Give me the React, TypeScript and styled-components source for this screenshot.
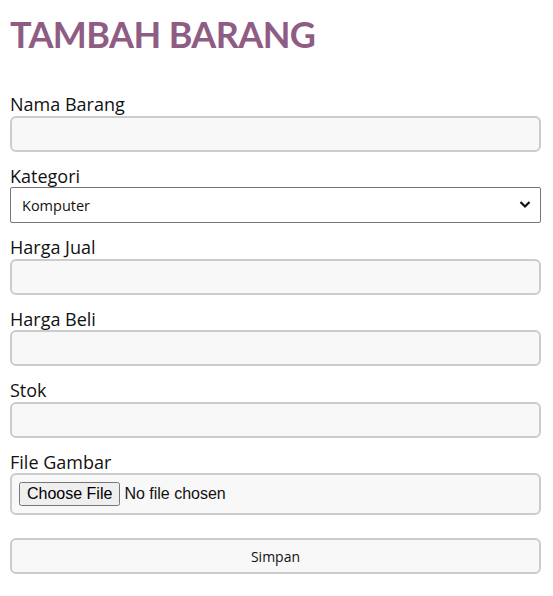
import React from "react";
import styled, { createGlobalStyle } from "styled-components";

const GlobalStyle = createGlobalStyle`
  body {
    margin: 0;
    background: #fff;
    font-family: "Open Sans", "DejaVu Sans", sans-serif;
  }
`;

const Page = styled.div`
  padding: 12px 10px 20px 10px;
  width: 531px;
`;

const Title = styled.h1`
  margin: 0 0 38px 0;
  font-family: Lato, "Open Sans", sans-serif;
  font-size: 36px;
  font-weight: 700;
  line-height: 44px;
  color: #8f5d84;
  letter-spacing: -0.6px;
`;

const Form = styled.form`
  display: flex;
  flex-direction: column;
`;

const Field = styled.div`
  display: flex;
  flex-direction: column;
  margin-bottom: 14px;
`;

const Label = styled.label`
  font-size: 18px;
  line-height: 21.5px;
  color: #111;
`;

const TextInput = styled.input`
  box-sizing: border-box;
  width: 100%;
  height: 36px;
  border: 2px solid #cccccc;
  border-radius: 6px;
  background: #f8f8f8;
  padding: 0 10px;
  font-size: 14px;
  outline: none;
`;

const SelectWrap = styled.div`
  position: relative;
  width: 100%;
`;

const Select = styled.select`
  box-sizing: border-box;
  width: 100%;
  height: 36px;
  border: 1px solid #767676;
  border-radius: 2px;
  background: #fff;
  padding: 0 30px 0 11px;
  font-family: "Open Sans", sans-serif;
  font-size: 14.5px;
  color: #111;
  appearance: none;
  -webkit-appearance: none;
`;

const Chevron = styled.svg`
  position: absolute;
  right: 10px;
  top: 13px;
  width: 12px;
  height: 9px;
  pointer-events: none;
`;

const FileBox = styled.div`
  box-sizing: border-box;
  width: 100%;
  height: 42px;
  border: 2px solid #cccccc;
  border-radius: 6px;
  background: #f8f8f8;
  display: flex;
  align-items: center;
  padding: 0 7px;
`;

const FileInput = styled.input`
  font-family: "Liberation Sans", Arial, sans-serif;
  font-size: 16px;
  color: #111;
`;

const SubmitButton = styled.button`
  box-sizing: border-box;
  width: 100%;
  height: 36px;
  margin-top: 9px;
  border: 2px solid #cccccc;
  border-radius: 6px;
  background: #f8f8f8;
  font-family: "Open Sans", sans-serif;
  font-size: 14px;
  color: #111;
`;

export default function App() {
  return (
    <>
      <GlobalStyle />
      <Page>
        <Title>TAMBAH BARANG</Title>
        <Form onSubmit={(e) => e.preventDefault()}>
          <Field>
            <Label htmlFor="nama">Nama Barang</Label>
            <TextInput id="nama" type="text" />
          </Field>
          <Field>
            <Label htmlFor="kategori">Kategori</Label>
            <SelectWrap>
              <Select id="kategori" defaultValue="Komputer">
                <option value="Komputer">Komputer</option>
                <option value="Elektronik">Elektronik</option>
                <option value="Hp">Hand Phone</option>
              </Select>
              <Chevron viewBox="0 0 12 9">
                <path d="M1.5 2 L6 6.5 L10.5 2" fill="none" stroke="#111" strokeWidth="2.2" />
              </Chevron>
            </SelectWrap>
          </Field>
          <Field>
            <Label htmlFor="jual">Harga Jual</Label>
            <TextInput id="jual" type="text" />
          </Field>
          <Field>
            <Label htmlFor="beli">Harga Beli</Label>
            <TextInput id="beli" type="text" />
          </Field>
          <Field>
            <Label htmlFor="stok">Stok</Label>
            <TextInput id="stok" type="text" />
          </Field>
          <Field>
            <Label htmlFor="gambar">File Gambar</Label>
            <FileBox>
              <FileInput id="gambar" type="file" />
            </FileBox>
          </Field>
          <SubmitButton type="submit">Simpan</SubmitButton>
        </Form>
      </Page>
    </>
  );
}
